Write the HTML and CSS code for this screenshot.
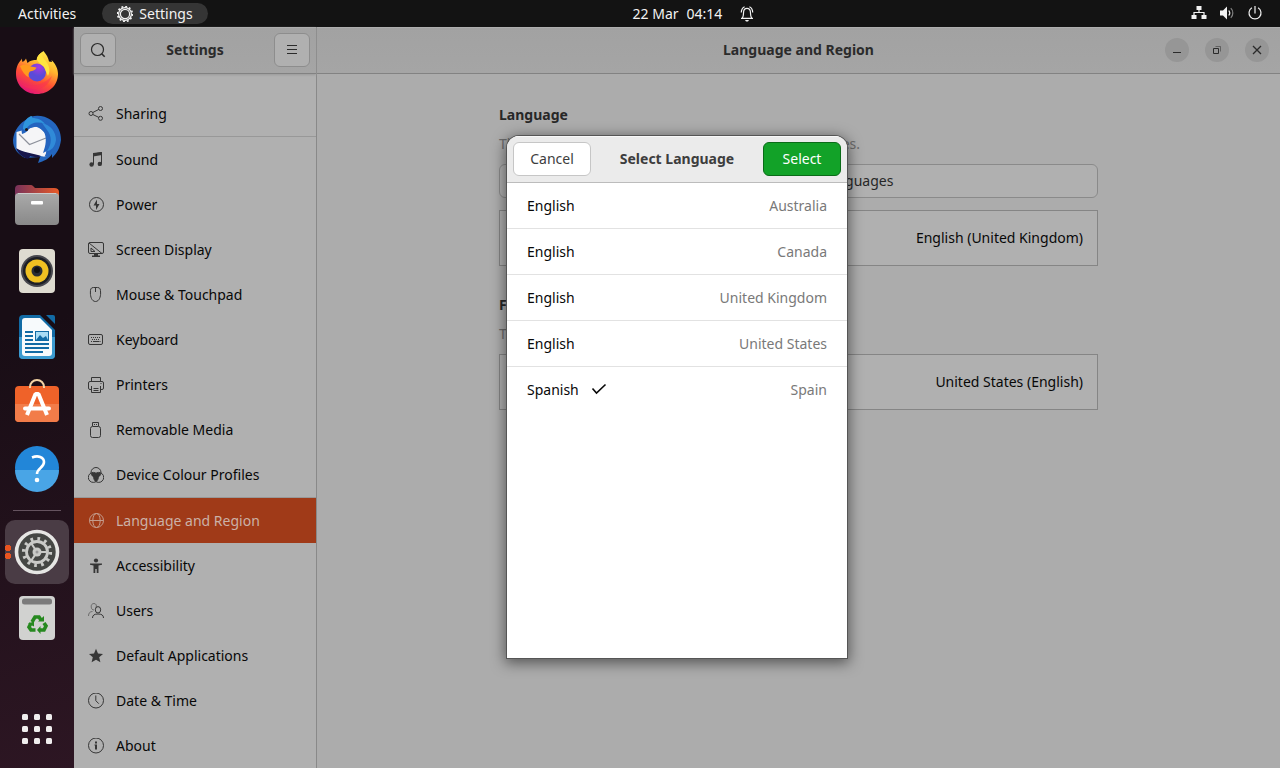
FILE: index.html
```html
<!DOCTYPE html>
<html lang="en-GB">
<head>
<meta charset="utf-8">
<title>Settings</title>
<link rel="stylesheet" href="styles.css">
</head>
<body>
<header class="topbar">
  <div class="topbar-left">
    <button class="top-button" type="button">Activities</button>
    <button class="top-button app-menu" type="button">
      <svg width="16" height="16" viewBox="0 0 16 16" fill="none" stroke="currentColor"><circle cx="8" cy="8" r="4.6" stroke-width="1.2"/><circle cx="8" cy="8" r="6.4" stroke-width="1.2"/><circle cx="8" cy="8" r="7.4" stroke-width="1.6" stroke-dasharray="1.9 1.97"/></svg>
      Settings
    </button>
  </div>
  <button class="top-button clock" type="button">
    <span>22 Mar</span><span>04:14</span>
    <svg class="bell" width="16" height="16" viewBox="0 0 16 16" fill="none" stroke="currentColor" stroke-width="1.2"><path d="M2 12.4h12M3.4 12C4.6 10.6 4.4 8 4.6 5.8 4.8 3.4 6.2 2.3 8 2.3s3.200 1.100 3.400 3.500C11.600 8 11.400 10.600 12.600 12"/><path d="M2.300 6.500C2.300 3.600 3.600 1.700 5.600.8M13.700 6.500c0-2.900-1.300-4.800-3.300-5.700"/><path d="M6 14h4l-1 1.500H7z" fill="currentColor" stroke="none"/></svg>
  </button>
  <button class="top-button status" type="button" aria-label="System menu">
    <svg width="16" height="16" viewBox="0 0 16 16" fill="currentColor"><path d="M5.500 0h5v4h-5zM.5 9h5v4h-5zM10.500 9h5v4h-5z"/><path d="M8 4v2.500M3 9V6.500h10V9" fill="none" stroke="currentColor" stroke-width="1.200"/></svg>
    <svg width="16" height="16" viewBox="0 0 16 16" fill="none" stroke="currentColor" stroke-width="1.200"><path d="M1 4.500h3l4-4v13l-4-4H1z" fill="currentColor" stroke="none"/><path d="M9.800 4.500c1.200 1.500 1.200 3.500 0 5"/><path d="M11.800 2.200c2.700 2.700 2.700 6.900 0 9.600" opacity=".5"/></svg>
    <svg width="16" height="16" viewBox="0 0 16 16" fill="none" stroke="currentColor" stroke-width="1.200"><path d="M8 0v7.500M4.900 1.800a6 6 0 1 0 6.200 0"/></svg>
  </button>
</header>

<div class="desktop">
  <nav class="dock" aria-label="Dock">
    <button class="dock-item" type="button" aria-label="Firefox">
      <svg width="48" height="48" viewBox="0 0 48 48">
        <defs>
          <linearGradient id="fox" x1=".8" y1="0" x2=".3" y2="1"><stop offset="0" stop-color="#fff44f"/><stop offset=".35" stop-color="#ffb52e"/><stop offset=".65" stop-color="#ff5033"/><stop offset="1" stop-color="#e2127c"/></linearGradient>
          <radialGradient id="globe" cx=".6" cy=".2"><stop offset="0" stop-color="#a838e0"/><stop offset="1" stop-color="#5a4bd8"/></radialGradient>
        </defs>
        <path d="M30.500 2c3 3.500 5 7 5.500 10.500l3 .5-.500-2c4 4 6.500 8.500 6.500 14 0 11.500-9.500 20-21 20S3 36.500 3 25c0-6 1.500-10 5-14l.5-1.500 1 3.500c1.800-1 2.800-2 3.500-3.500l1.500 4.500c3-3 6-3 9-3 .3-3.500 3-6.500 7-9z" fill="url(#fox)"/>
        <path d="M4 30c5 8 21 11 35-3-4 11-12 14-20 13-7-1-12-5-15-10z" fill="#f92d55" opacity=".5"/>
        <circle cx="24" cy="23.500" r="9" fill="url(#globe)"/>
        <path d="M7 17c4-2 8-1.500 11 .5l5.500 1c-.5 2.500-4 3.500-6.500 4-1.500 1.500-2 3.500-1 6-4-2-7-6-9-11.500z" fill="#ff9a1d"/>
        <path d="M24 11c2 3 5 5 7 7l4 9c3-6 1-12-4-17-2-2-2-4-1-7-4 2-6 4-6 8z" fill="#ffe440"/>
      </svg>
    </button>
    <button class="dock-item" type="button" aria-label="Thunderbird">
      <svg width="48" height="48" viewBox="0 0 48 48">
        <path d="M14 4C20-1 31 0 38 5c7 5 10 12 10 20-1 8-4 13-9 18l0-4c-3 5-8 7-14 9l2-6L12 43C5 39 0 34 0 25 1 15 7 8 14 4z" fill="#2467bf"/>
        <path d="M3.500 17L25 11l9 9-1 22C22 40 11 38 3.500 34z" fill="#f5f5f7"/>
        <path d="M6 19l10.500 10.500L33 23" fill="none" stroke="#8d919b" stroke-width="1.200"/>
        <path d="M3 33c8 5 17 5 25 8-3 2-7 1-11 0 0 1-1 2-2 3C9 42 5 38 3 33z" fill="#17164b"/>
        <path d="M9 19C7 10 13 3 22 3c12 0 21 8 21 20 0 9-5 15-12 20l3-7-4 2c3-8 4-15 1-21-4-5-11-7-15-3-2 3-4 4-7 5z" fill="#2464bf"/>
        <path d="M34 15c5 6 5 14 0 21 4 0 8-4 9-11 0-8-5-15-14-17z" fill="#308ad8"/>
        <path d="M10 14c0-6 3-11 8-13 1 0 2 1 1 2 6 0 10 2 13 6-7-3-15-1-18 4-1 2-3 2-4 1z" fill="#2f95dc"/>
        <circle cx="13.500" cy="14.500" r="1.500" fill="#1e1714"/>
      </svg>
    </button>
    <button class="dock-item" type="button" aria-label="Files">
      <svg width="48" height="48" viewBox="0 0 48 48">
        <defs><linearGradient id="folder"><stop offset="0" stop-color="#77315a"/><stop offset="1" stop-color="#e95b28"/></linearGradient><linearGradient id="front" x2="0" y2="1"><stop offset="0" stop-color="#aaa"/><stop offset="1" stop-color="#898989"/></linearGradient></defs>
        <path d="M6 4h12q1 0 2 1l2 2h19q5 0 5 4v9H2V8q0-4 4-4z" fill="url(#folder)"/>
        <rect x="2" y="12" width="44" height="32" rx="4" fill="url(#front)"/><path d="M5 12.500h38" stroke="#ccc"/>
        <rect x="18" y="20" width="12" height="3.500" rx="1" fill="#fff"/>
      </svg>
    </button>
    <button class="dock-item" type="button" aria-label="Rhythmbox">
      <svg width="48" height="48" viewBox="0 0 48 48"><rect x="6" y="2" width="36" height="44" rx="4" fill="#dedbd0"/><circle cx="24" cy="24" r="16" fill="#48484e"/><circle cx="24" cy="24" r="14" fill="#1d1f25"/><circle cx="24" cy="24" r="11.500" fill="#efc022"/><circle cx="24" cy="24" r="5.500" fill="#292d35"/><circle cx="24" cy="23" r="3" fill="#111"/></svg>
    </button>
    <button class="dock-item" type="button" aria-label="LibreOffice Writer">
      <svg width="48" height="48" viewBox="0 0 48 48"><path d="M10 2h17l15 15v25q0 4-4 4H10q-4 0-4-4V6q0-4 4-4z" fill="#126ba5"/><path d="M6 24h36v18q0 4-4 4H10q-4 0-4-4z" fill="#3c9bd0"/><path d="M33 2h7q2 0 2 2v7z" fill="#126ba5"/><path d="M12 5h15l12 12v23q0 3-3 3H12q-3 0-3-3V8q0-3 3-3z" fill="#f7fafc"/><path d="M12 19h8M12 23h8M12 27h8M12 31h24M12 35h24M12 39h18" stroke="#126ba5" stroke-width="2"/><rect x="22.500" y="18.500" width="13" height="9" fill="#a8dbf4" stroke="#126ba5"/><path d="M23 27l4-5 3 3 3-2 2 4z" fill="#126ba5"/></svg>
    </button>
    <button class="dock-item" type="button" aria-label="Ubuntu Software">
      <svg width="48" height="48" viewBox="0 0 48 48"><rect x="2" y="7" width="44" height="36" rx="4" fill="#ef6229"/><path d="M2 25h44v14q0 4-4 4H6q-4 0-4-4z" fill="#f27c49"/><path d="M17 9V8a7 7 0 0 1 14 0v1" fill="none" stroke="#f3d3a4" stroke-width="2"/><path d="M14 36l8.500-21h3L34 36" fill="none" stroke="#fff" stroke-width="4" stroke-linejoin="bevel"/><rect x="10" y="27.500" width="28" height="4" rx="2" fill="#fff"/></svg>
    </button>
    <button class="dock-item" type="button" aria-label="Help">
      <svg width="48" height="48" viewBox="0 0 48 48"><circle cx="24" cy="23" r="22" fill="#2286d8"/><path d="M2 25a22 22 0 0 0 44 0z" fill="#49a5e6"/><path d="M19 12.500c6-2.500 12-.5 12 4.500 0 6-7 6-7 12" fill="none" stroke="#fff" stroke-width="2.600"/><circle cx="24" cy="35" r="2.300" fill="#fff"/></svg>
    </button>
    <hr class="dock-separator">
    <button class="dock-item dock-item-active" type="button" aria-label="Settings">
      <span class="running-dots"></span>
      <svg width="48" height="48" viewBox="0 0 48 48"><circle cx="24" cy="24" r="20.500" fill="#454744" stroke="#e6e6e4" stroke-width="3.600"/><circle cx="24" cy="24" r="13.300" fill="none" stroke="#c9cac7" stroke-width="3.600" stroke-dasharray="2.700 4.264"/><circle cx="24" cy="24" r="10.500" fill="none" stroke="#c9cac7" stroke-width="2.800"/><circle cx="24" cy="24" r="4.500" fill="#c9cac7"/><path d="M24 24h10M24 24l-6-9M24 24l-6 9" stroke="#c9cac7" stroke-width="2.200"/><circle cx="24" cy="24" r="1.500" fill="#999"/></svg>
    </button>
    <button class="dock-item" type="button" aria-label="Rubbish Bin">
      <svg width="48" height="48" viewBox="0 0 48 48"><rect x="6" y="2" width="36" height="44" rx="4" fill="#d1d2d0"/><rect x="9" y="4.500" width="30" height="6" rx="2.500" fill="#7b7b7b"/><path d="M19 28l3-5h4l2 3M31 29l2 3-2 4h-4M22.500 36h-4.500l-2-3 2-4" fill="none" stroke="#26891f" stroke-width="3.600"/><path d="M25 27.500h6v-5.500zM27.500 32v8l-3.500-4zM15 29.500l6-2v5z" fill="#26891f"/></svg>
    </button>
    <button class="dock-item dock-apps" type="button" aria-label="Show Applications">
      <svg width="48" height="48" viewBox="0 0 48 48" fill="#f0eeee"><g id="appdots"><rect x="9" y="9" width="6" height="6" rx="1.500"/><rect x="21" y="9" width="6" height="6" rx="1.500"/><rect x="33" y="9" width="6" height="6" rx="1.500"/></g><use href="#appdots" y="12"/><use href="#appdots" y="24"/></svg>
    </button>
  </nav>

  <div class="window">
    <aside class="sidebar">
      <header class="bar sidebar-bar">
        <button class="bar-button" type="button" aria-label="Search"><svg width="16" height="16" viewBox="0 0 16 16" fill="none" stroke="currentColor" stroke-width="1.200"><circle cx="7.500" cy="7.500" r="6"/><path d="M11.700 11.700l3 3" stroke-width="1.600"/></svg></button>
        <h1 class="bar-title">Settings</h1>
        <button class="bar-button" type="button" aria-label="Main menu"><svg width="16" height="16" viewBox="0 0 16 16" stroke="currentColor"><path d="M3 3.500h10M3 7.500h10M3 11.500h10"/></svg></button>
      </header>
      <nav class="categories" aria-label="Settings categories">
        <a class="category" href="#sharing"><svg class="icon" viewBox="0 0 16 16"><circle cx="3" cy="7.500" r="2"/><circle cx="12.500" cy="2.500" r="2"/><circle cx="12.500" cy="12.300" r="2"/><path d="M4.800 6.500l6-3.100M4.800 8.500l6 2.900"/></svg>Sharing</a>
        <hr class="rule">
        <a class="category" href="#sound"><svg class="icon" viewBox="0 0 16 16"><path d="M5.500 12.500V2L13.500.5V12"/><path class="solid" d="M5 1L14 0v3L5 4.500z"/><circle class="solid" cx="3.600" cy="12.500" r="2.200"/><circle class="solid" cx="11.800" cy="11.900" r="2.200"/></svg>Sound</a>
        <a class="category" href="#power"><svg class="icon" viewBox="0 0 16 16"><circle cx="8.500" cy="7.500" r="7"/><path class="solid" d="M9 2.500L5.500 8.500H8v4.500L11.500 7H9z"/></svg>Power</a>
        <a class="category" href="#display"><svg class="icon" viewBox="0 0 16 16"><rect x=".5" y=".5" width="15" height="11" rx="1.500"/><path d="M1 1l13 10.500M3 6v3.500h4z"/><path class="solid" d="M6 12h4v1.500h2V15H4v-1.500h2z"/></svg>Screen Display</a>
        <a class="category" href="#mouse"><svg class="icon" viewBox="0 0 16 16"><path d="M5.500.5h4c3 0 3 2 3.100 5.500s-1.300 8.500-5.100 8.500-5.100-5-5.100-8.500.1-5.500 3.100-5.500zM7.500.5V5"/></svg>Mouse &amp; Touchpad</a>
        <a class="category" href="#keyboard"><svg class="icon" viewBox="0 0 16 16"><rect x=".5" y="2.500" width="14" height="10" rx="1.500"/><path d="M3 5.500h9.500M4 7.500h8" stroke-dasharray="1 1"/><path d="M3 9.500h1M5 9.500h6M11.500 9.500h1"/></svg>Keyboard</a>
        <a class="category" href="#printers"><svg class="icon" viewBox="0 0 16 16"><path d="M3.500 4.500v-4h9v4M3 12.500H2Q.5 12.500.5 11V6q0-1.500 1.500-1.500h12q1.500 0 1.500 1.500v5q0 1.500-1.500 1.500h-1M3.500 9v6.500h9V9M5.500 11.500h5M5.500 13.500h5M12.500 6.500h1"/></svg>Printers</a>
        <a class="category" href="#media"><svg class="icon" viewBox="0 0 16 16"><rect x="2.500" y="4.500" width="10" height="11" rx="2"/><path d="M4.500 4V.5h6V4M6 2.500h1M8 2.500h1"/></svg>Removable Media</a>
        <a class="category" href="#colour"><svg class="icon" viewBox="0 0 16 16"><circle cx="8" cy="5.500" r="5"/><circle cx="5.300" cy="10.400" r="5"/><circle cx="10.700" cy="10.400" r="5"/><path class="solid" d="M3.100 6.500C5 5.100 7 5.600 8 6.500c1-.9 3-1.400 4.900 0-.6 1.700-1.500 3-2.700 3.500.3 1.800-.6 3.500-2.200 4.700-1.600-1.200-2.500-2.900-2.200-4.700C4.600 9.500 3.700 8.200 3.100 6.500z"/></svg>Device Colour Profiles</a>
        <hr class="rule">
        <a class="category category-current" href="#region" aria-current="page"><svg class="icon" viewBox="0 0 16 16"><circle cx="8.500" cy="7.500" r="7"/><ellipse cx="8.500" cy="7.500" rx="3.700" ry="7"/><path d="M1.500 7.500h14"/></svg>Language and Region</a>
        <a class="category" href="#accessibility"><svg class="icon" viewBox="0 0 16 16"><circle class="solid" cx="8" cy="2.500" r="2.100"/><path class="solid" d="M2 5.500h12v1.300l-3.500.8V15H8.700v-4H7.300v4H5.500V7.600L2 6.800z"/></svg>Accessibility</a>
        <a class="category" href="#users"><svg class="icon" viewBox="0 0 16 16"><g opacity=".55"><path d="M8 4.500C9 2.500 8 .5 6 .5S3 2 3.200 4 4.500 7 6 7M.5 13c0-3 1.500-4.500 4-4.500"/></g><ellipse cx="10" cy="6.800" rx="2.700" ry="3.200"/><path d="M4.500 15c0-3 2-4 5.500-4s5.500 1 5.500 4"/></svg>Users</a>
        <a class="category" href="#defaults"><svg class="icon" viewBox="0 0 16 16"><path class="solid" d="M8 .8l2 4.700 5 .5-3.800 3.300 1.200 5L8 11.700l-4.400 2.600 1.200-5L1 6l5-.5z"/></svg>Default Applications</a>
        <a class="category" href="#date"><svg class="icon" viewBox="0 0 16 16"><circle cx="8" cy="7.500" r="7.500"/><path d="M7.800 2.500v5.200l3 3"/></svg>Date &amp; Time</a>
        <a class="category" href="#about"><svg class="icon" viewBox="0 0 16 16"><circle cx="8" cy="7.500" r="7.500"/><path class="solid" d="M7 3.500h2v2H7zM6.500 6.500H9v5H7v-4h-.5z"/></svg>About</a>
      </nav>
    </aside>

    <main class="panel">
      <header class="bar panel-bar">
        <h2 class="bar-title panel-title">Language and Region</h2>
        <div class="window-controls">
          <button class="window-button" type="button" aria-label="Minimise"><svg width="16" height="16" viewBox="0 0 16 16" stroke="currentColor"><path d="M4 10.500h8"/></svg></button>
          <button class="window-button" type="button" aria-label="Restore"><svg width="16" height="16" viewBox="0 0 16 16" fill="none" stroke="currentColor"><path d="M4.500 6.500h5v5h-5z"/><path d="M6.500 4.500h5v5" opacity=".5"/></svg></button>
          <button class="window-button" type="button" aria-label="Close"><svg width="16" height="16" viewBox="0 0 16 16" stroke="currentColor" stroke-width="1.300"><path d="M4 4l8 8M12 4l-8 8"/></svg></button>
        </div>
      </header>
      <div class="content">
        <section class="group">
          <h3 class="group-title">Language</h3>
          <p class="group-note">The language used for text in windows and web pages.</p>
          <button class="manage" type="button">Manage Installed Languages</button>
          <button class="setting" type="button">English (United Kingdom)</button>
        </section>
        <section class="group">
          <h3 class="group-title">Formats</h3>
          <p class="group-note">The format used for numbers and dates.</p>
          <button class="setting" type="button">United States (English)</button>
        </section>
      </div>
    </main>

    <div class="overlay">
      <section class="dialog" role="dialog" aria-modal="true" aria-labelledby="dialog-title">
        <header class="dialog-bar">
          <button class="dialog-button" type="button">Cancel</button>
          <h2 class="bar-title dialog-title" id="dialog-title">Select Language</h2>
          <button class="dialog-button dialog-button-primary" type="button">Select</button>
        </header>
        <div class="languages">
          <button class="language" type="button"><span>English</span><span class="region">Australia</span></button>
          <button class="language" type="button"><span>English</span><span class="region">Canada</span></button>
          <button class="language" type="button"><span>English</span><span class="region">United Kingdom</span></button>
          <button class="language" type="button"><span>English</span><span class="region">United States</span></button>
          <button class="language" type="button" aria-pressed="true"><span>Spanish</span><svg width="16" height="16" viewBox="0 0 16 16" fill="none" stroke="currentColor" stroke-width="1.600"><path d="M1.500 6.500l4 4.500L14.500 2.500"/></svg><span class="region">Spain</span></button>
        </div>
      </section>
    </div>
  </div>
</div>
</body>
</html>
```

FILE: styles.css
```css
* { box-sizing: border-box; }

body {
  margin: 0;
  height: 100vh;
  display: flex;
  flex-direction: column;
  overflow: hidden;
  font-family: "Noto Sans", sans-serif;
  font-size: 14px;
  line-height: 20px;
  color: #080808;
  background: #1b0f17;
}

button {
  margin: 0;
  padding: 0;
  border: 0;
  background: none;
  color: inherit;
  font: inherit;
}

h1, h2, h3, p { margin: 0; }
a { color: inherit; text-decoration: none; }
svg { display: block; flex: none; }

/* Top bar */
.topbar {
  flex: none;
  height: 27px;
  display: grid;
  grid-template-columns: 1fr auto 1fr;
  align-items: center;
  background: #131313;
  color: #f2f2f2;
}
.topbar-left { display: flex; align-items: center; gap: 16px; padding-left: 8px; }
.top-button { display: flex; align-items: center; padding: 0 10px; }
.app-menu {
  gap: 6px;
  padding: 0 15px;
  height: 21px;
  border-radius: 11px;
  background: #353535;
}
.clock { gap: 8px; padding: 0 0 0 108px; }
.bell { margin-left: 9px; }
.status { justify-self: end; gap: 12px; padding: 0 17px; }

/* Dock */
.desktop { flex: 1; min-height: 0; display: flex; }
.dock {
  width: 74px;
  flex: none;
  display: flex;
  flex-direction: column;
  align-items: center;
  gap: 2px;
  padding: 14px 0 7px;
  background: linear-gradient(165deg, #180d15 40%, #2d1623);
}
.dock-item {
  position: relative;
  flex: none;
  width: 64px;
  height: 64px;
  display: grid;
  place-items: center;
  border-radius: 10px;
}
.dock-item-active { background: #4a3c45; }
.running-dots {
  position: absolute;
  left: 0;
  top: 24px;
  width: 6px;
  height: 16px;
  background: radial-gradient(circle at 3px 4px, #e95420 3px, transparent 3px) 0 0 / 6px 8px;
}
.dock-separator { width: 48px; margin: 7px 0; border: 0; border-top: 1px solid #65535f; }
.dock-apps { margin-top: auto; }

/* Window */
.window { position: relative; flex: 1; min-width: 0; display: flex; }
.sidebar {
  flex: none;
  width: 243px;
  display: flex;
  flex-direction: column;
  border-right: 1px solid #898989;
  background: #b0b0b0;
}
.bar {
  flex: none;
  height: 47px;
  align-items: center;
  background: linear-gradient(#a2a2a2, #a5a5a5);
  border-bottom: 1px solid #828282;
  box-shadow: inset 0 1px #aeaeae;
  color: #2b2b2b;
}
.bar-title { font-size: 14px; line-height: 20px; font-weight: 700; text-align: center; }
.sidebar-bar { display: flex; justify-content: space-between; padding: 0 6px; box-shadow: inset 0 1px #aeaeae, 0 1px 2px #9a9a9a; }
.bar-button {
  width: 36px;
  height: 34px;
  display: grid;
  place-items: center;
  border: 1px solid #8d8d8d;
  border-radius: 6px;
  background: #b0b0b0;
}
.categories { padding-top: 17px; }
.category { display: flex; align-items: center; gap: 12px; height: 45px; padding: 0 14px; }
.category-current { background: #a03a18; color: #cbb1a7; }
.rule { margin: 0; border: 0; border-top: 1px solid #989898; }
.icon { width: 16px; height: 16px; fill: none; stroke: #363636; stroke-width: 1; }
.icon .solid { fill: #363636; stroke: none; }
.category-current .icon { stroke: #c49c8d; }

.panel { flex: 1; min-width: 0; background: #acacac; }
.panel-bar { display: grid; grid-template-columns: 1fr auto 1fr; padding: 0 11px; }
.panel-title { grid-column: 2; }
.window-controls { display: flex; justify-content: flex-end; gap: 16px; }
.window-button {
  width: 24px;
  height: 24px;
  display: grid;
  place-items: center;
  border-radius: 50%;
  background: #969696;
}
.content { max-width: 599px; margin: 0 auto; padding-top: 31px; display: flex; flex-direction: column; gap: 29px; }
.group { display: flex; flex-direction: column; }
.group-title { font-size: 14px; line-height: 20px; font-weight: 700; color: #272727; }
.group-note { margin: 9px 0 10px; color: #6b6b6b; }
.manage { height: 34px; margin-bottom: 12px; border: 1px solid #8a8a8a; border-radius: 6px; background: #b0b0b0; color: #272727; }
.setting {
  height: 56px;
  padding: 0 14px;
  border: 1px solid #858585;
  background: #b0b0b0;
  text-align: right;
}

/* Dialog */
.overlay { position: absolute; inset: 0; display: flex; align-items: center; justify-content: center; padding-bottom: 1px; }
.dialog {
  width: 340px;
  height: 522px;
  max-height: 100%;
  overflow: hidden;
  border-radius: 12px 12px 0 0;
  background: #fff;
  box-shadow: 0 0 0 1px #555, 0 3px 14px 2px rgba(0, 0, 0, .5);
}
.dialog-bar {
  display: flex;
  align-items: center;
  justify-content: space-between;
  height: 47px;
  padding: 0 6px;
  background: #ebebeb;
  border-bottom: 1px solid #bcbcbc;
  box-shadow: inset 0 1px #f8f8f8;
}
.dialog-title { color: #3d3d3d; }
.dialog-button {
  width: 78px;
  height: 34px;
  border: 1px solid #c6c6c6;
  border-radius: 6px;
  background: #fff;
  color: #3d3d3d;
}
.dialog-button-primary { border-color: #0a6b18; background: #12a228; color: #fff; }
.languages { display: flex; flex-direction: column; }
.language {
  display: flex;
  align-items: center;
  gap: 12px;
  height: 46px;
  padding: 0 20px;
  border-bottom: 1px solid #e2e2e2;
}
.language:last-child { border-bottom: 0; }
.region { margin-left: auto; color: #797979; }
```
